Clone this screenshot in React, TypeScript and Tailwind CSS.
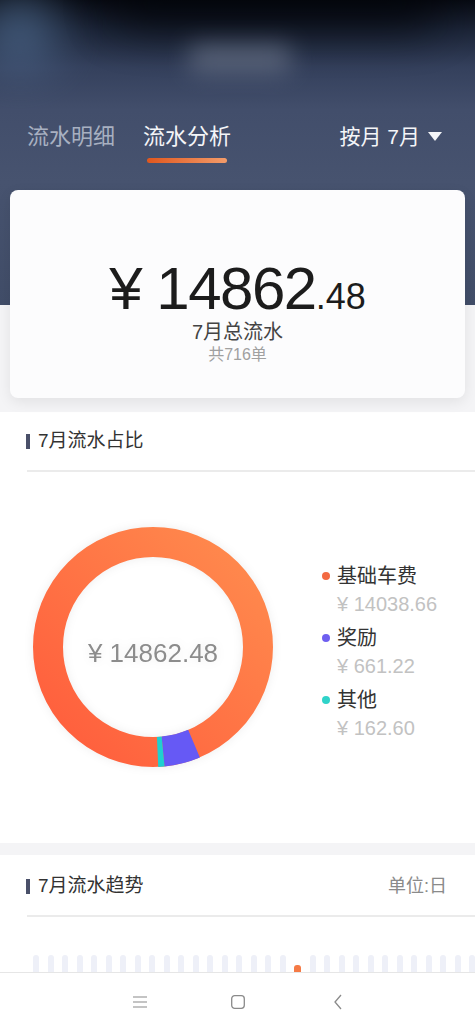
import React from "react";

const FONT = "font-['Liberation_Sans','Noto_Sans_CJK_SC',sans-serif]";

// donut geometry (page px)
const CX = 120;
const CY = 120;
const R = 105;

const pt = (deg: number) => {
  const a = (deg * Math.PI) / 180;
  return [CX + R * Math.sin(a), CY - R * Math.cos(a)];
};

const arc = (from: number, to: number) => {
  const [x1, y1] = pt(from);
  const [x2, y2] = pt(to);
  const large = to - from > 180 ? 1 : 0;
  return `M ${x1} ${y1} A ${R} ${R} 0 ${large} 1 ${x2} ${y2}`;
};

const legend = [
  { name: "基础车费", value: "¥ 14038.66", dot: "bg-[#f36a42]" },
  { name: "奖励", value: "¥ 661.22", dot: "bg-[#6e5ff0]" },
  { name: "其他", value: "¥ 162.60", dot: "bg-[#2fd3c9]" },
];

const Donut: React.FC = () => (
  <svg width="240" height="240" viewBox="0 0 240 240" className="drop-shadow-[0_0_5px_rgba(0,0,0,0.07)]">
    <defs>
      <linearGradient id="orange" x1="1" y1="0" x2="0" y2="1">
        <stop offset="0%" stopColor="#ff8c4e" />
        <stop offset="100%" stopColor="#ff5c3c" />
      </linearGradient>
    </defs>
    <circle cx={CX} cy={CY} r={R} fill="none" stroke="url(#orange)" strokeWidth="30" />
    <path d={arc(157, 174.5)} fill="none" stroke="#6659f5" strokeWidth="30" />
    <path d={arc(174.5, 177.5)} fill="none" stroke="#1fd0d0" strokeWidth="30" />
    <text
      x={CX}
      y={CY + 15}
      textAnchor="middle"
      fontSize="26"
      fill="#8c8c8c"
      fontFamily="Liberation Sans, Noto Sans CJK SC, sans-serif"
    >
      ¥ 14862.48
    </text>
  </svg>
);

const SectionHead: React.FC<{ title: string; right?: string }> = ({ title, right }) => (
  <div>
    <div className="flex items-center h-[58px] pl-[26px] pr-[28px]">
      <span className="w-[4px] h-[15px] bg-[#4a5069] mr-[8px]" />
      <span className="text-[19px] text-[#333]">{title}</span>
      {right && <span className="ml-auto text-[18px] text-[#8a8a8a]">{right}</span>}
    </div>
    <div className="ml-[27px] h-[1.5px] bg-[#ebebeb]" />
  </div>
);

export default function App() {
  const bars = Array.from({ length: 31 }, (_, i) => i);

  return (
    <div className={`h-[1030px] w-[475px] flex flex-col overflow-hidden bg-[#f4f4f6] ${FONT}`}>
      <div className="flex-1 min-h-0 overflow-hidden">
        {/* header */}
        <div className="relative h-[305px] overflow-hidden bg-[linear-gradient(180deg,#070a12_0%,#1c2538_10%,#34405c_22%,#424e6b_36%,#47536f_60%,#414d68_100%)]">
          <div className="absolute left-[-20px] top-[-10px] w-[80px] h-[80px] rounded-full bg-[#5a7aa2] opacity-60 blur-xl" />
          <div className="absolute left-[110px] top-[-20px] w-[330px] h-[45px] rounded-full bg-[#020409] opacity-90 blur-xl" />
          <div className="absolute left-[190px] top-[45px] w-[100px] h-[28px] bg-[#6a7488] opacity-70 blur-md" />

          <div className="relative pt-[120px] px-[27px] flex items-start">
            <div className="flex flex-col items-start">
              <span className="text-[22px] leading-[34px] text-[#a8b0c1]">流水明细</span>
            </div>
            <div className="flex flex-col items-center ml-[28px]">
              <span className="text-[22px] leading-[34px] text-[#f4f5f8]">流水分析</span>
              <span className="mt-[4px] w-[80px] h-[5px] rounded-full bg-[linear-gradient(90deg,#e0571e,#f39c6a)]" />
            </div>
            <div className="ml-auto flex items-center h-[34px] mr-[6px] text-[21px] text-[#f4f5f8]">
              按月 7月
              <svg width="14" height="10" viewBox="0 0 14 10" className="ml-[8px]">
                <path d="M0 0 L14 0 L7 9 Z" fill="#f4f5f8" />
              </svg>
            </div>
          </div>
        </div>

        {/* total card */}
        <div className="relative -mt-[115px] px-[10px]">
          <div className="h-[208px] rounded-[8px] bg-[#fcfcfd] shadow-[0_4px_14px_rgba(0,0,0,0.08)] flex flex-col items-center pt-[69px]">
            <div className="leading-none text-[#1c1c1c] flex items-baseline">
              <span className="text-[60px] tracking-[-1.5px]">¥ 14862</span>
              <span className="text-[36px]">.48</span>
            </div>
            <div className="text-[20px] leading-[26px] text-[#444]">7月总流水</div>
            <div className="text-[16px] leading-[20px] text-[#a0a0a0]">共716单</div>
          </div>
        </div>

        {/* proportion */}
        <section className="mt-[14px] h-[431px] bg-white">
          <SectionHead title="7月流水占比" />
          <div className="flex items-start pl-[33px] pt-[55px]">
            <Donut />
            <div className="ml-[49px] mt-[35px] flex flex-col gap-[6px]">
              {legend.map((l) => (
                <div key={l.name}>
                  <div className="flex items-center h-[28px]">
                    <span className={`w-[8px] h-[8px] rounded-full ${l.dot} mr-[7px]`} />
                    <span className="text-[20px] text-[#333]">{l.name}</span>
                  </div>
                  <div className="h-[28px] flex items-center pl-[15px] text-[20px] text-[#c2c2c2]">{l.value}</div>
                </div>
              ))}
            </div>
          </div>
        </section>

        {/* trend */}
        <section className="mt-[12px] bg-white h-[200px]">
          <div className="pt-[2px]">
            <SectionHead title="7月流水趋势" right="单位:日" />
          </div>
          <div className="flex items-end gap-[8.5px] pl-[33px] pt-[34px] h-[80px]">
            {bars.map((i) =>
              i === 18 ? (
                <span key={i} className="shrink-0 w-[7px] h-[32px] rounded-t-[3px] bg-[#f57a45] mt-auto" />
              ) : (
                <span key={i} className="shrink-0 w-[6px] h-[42px] rounded-t-[3px] bg-[#eef0f8]" />
              )
            )}
          </div>
        </section>
      </div>

      {/* system nav */}
      <div className="h-[58px] shrink-0 bg-white border-t border-[#e6e6e6] flex items-center">
        <svg width="14" height="12" viewBox="0 0 14 12" className="ml-[133px]">
          <path d="M0 1 H14 M0 6 H14 M0 11 H14" stroke="#8a8a8a" strokeWidth="1.2" />
        </svg>
        <svg width="14" height="14" viewBox="0 0 14 14" className="ml-[84px]">
          <rect x="0.7" y="0.7" width="12.6" height="12.6" rx="3" fill="none" stroke="#8a8a8a" strokeWidth="1.3" />
        </svg>
        <svg width="10" height="16" viewBox="0 0 10 16" className="ml-[88px]">
          <path d="M8 1 L2 8 L8 15" fill="none" stroke="#8a8a8a" strokeWidth="1.3" />
        </svg>
      </div>
    </div>
  );
}
